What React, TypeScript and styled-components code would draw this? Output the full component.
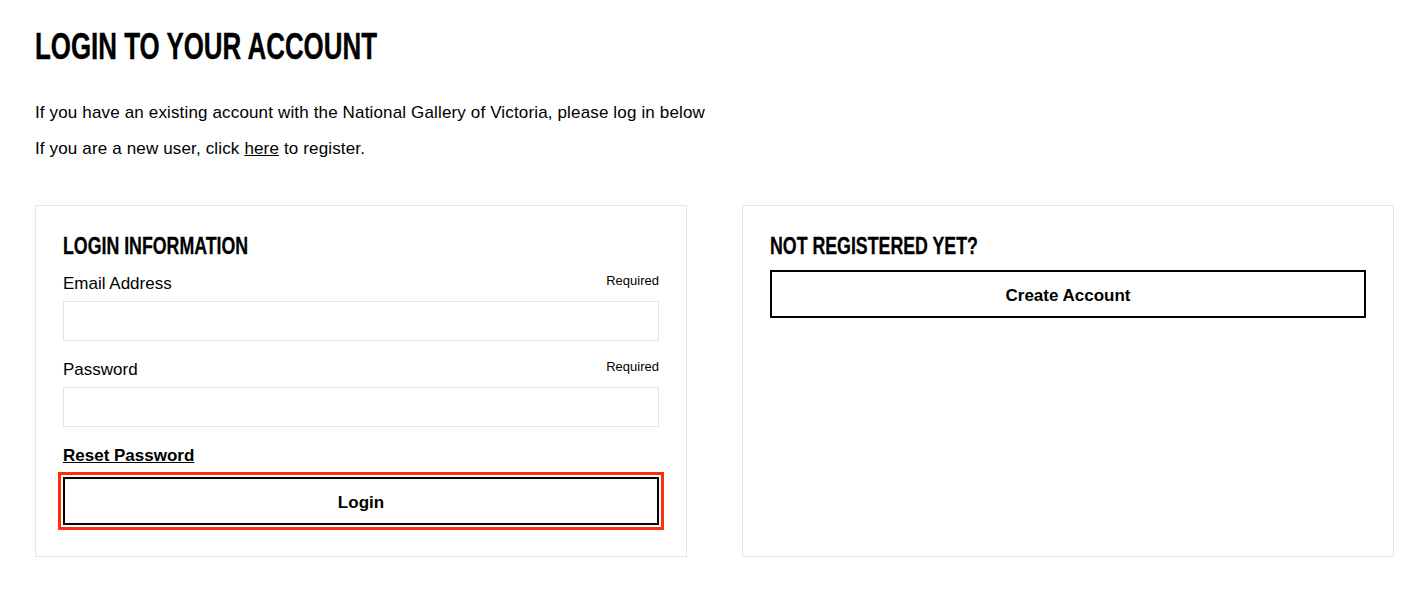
import React from "react";
import styled, { createGlobalStyle } from "styled-components";

const GlobalStyle = createGlobalStyle`
  html, body { margin: 0; padding: 0; background: #fff; }
  body { font-family: "Liberation Sans", Arial, sans-serif; color: #000; }
  * { box-sizing: border-box; }
`;

const Page = styled.main`
  padding: 29px 0 0 35px;
  width: 1394px;
`;

const Title = styled.h1`
  margin: 0;
  font-family: "Liberation Sans", Arial, sans-serif;
  font-weight: 700;
  font-size: 37px;
  line-height: 36px;
  transform: scaleX(0.7);
  transform-origin: left center;
  white-space: nowrap;
  -webkit-text-stroke: 0.4px #000;
`;

const Intro = styled.p`
  margin: 0;
  font-size: 17px;
  letter-spacing: 0.15px;
  line-height: 36px;
`;

const IntroBlock = styled.div`
  margin-top: 30px;
`;

const TextLink = styled.a`
  color: #000;
  text-decoration: underline;
`;

const Columns = styled.div`
  display: grid;
  grid-template-columns: 652px 652px;
  column-gap: 55px;
  margin-top: 38px;
`;

const Card = styled.section`
  border: 1px solid #e6e6e6;
  padding: 26px 27px 31px 27px;
  display: flex;
  flex-direction: column;
`;

const CardTitle = styled.h2`
  margin: 0;
  font-family: "Liberation Sans", Arial, sans-serif;
  font-weight: 700;
  font-size: 24px;
  line-height: 28px;
  transform: scaleX(0.74);
  transform-origin: left center;
  white-space: nowrap;
  -webkit-text-stroke: 0.3px #000;
`;

const Field = styled.div<{ $first?: boolean }>`
  display: flex;
  flex-direction: column;
  margin-top: ${(p) => (p.$first ? "9px" : "14px")};
`;

const LabelRow = styled.div`
  display: flex;
  justify-content: space-between;
  align-items: flex-start;
  height: 28px;
`;

const Label = styled.label`
  font-size: 17px;
  line-height: 24px;
  margin-top: 3px;
`;

const Required = styled.span`
  font-size: 13px;
  line-height: 24px;
`;

const Input = styled.input`
  display: block;
  width: 100%;
  height: 40px;
  margin-top: 4px;
  border: 1px solid #e6e6e6;
  padding: 0 10px;
  font-size: 16px;
  font-family: inherit;
  background: #fff;
  outline: none;
`;

const ResetLink = styled.a`
  margin-top: 18px;
  font-size: 17px;
  font-weight: 700;
  line-height: 22px;
  color: #000;
  text-decoration: underline;
  align-self: flex-start;
`;

const Button = styled.button<{ $focused?: boolean }>`
  display: block;
  width: 100%;
  height: 48px;
  padding: 3px 0 0;
  border: 2px solid #000;
  background: #fff;
  color: #000;
  font-family: "Liberation Sans", Arial, sans-serif;
  font-weight: 700;
  font-size: 17px;
  cursor: pointer;
  outline: ${(p) => (p.$focused ? "3px solid #ff2d0b" : "none")};
  outline-offset: 2px;
`;

const LoginButton = styled(Button)`
  margin-top: 10px;
`;

const CreateButton = styled(Button)`
  margin-top: 10px;
`;

export default function App() {
  return (
    <>
      <GlobalStyle />
      <Page>
        <Title>LOGIN TO YOUR ACCOUNT</Title>
        <IntroBlock>
          <Intro>
            If you have an existing account with the National Gallery of Victoria, please log in below
          </Intro>
          <Intro>
            If you are a new user, click <TextLink href="#">here</TextLink> to register.
          </Intro>
        </IntroBlock>
        <Columns>
          <Card>
            <CardTitle>LOGIN INFORMATION</CardTitle>
            <Field $first>
              <LabelRow>
                <Label>Email Address</Label>
                <Required>Required</Required>
              </LabelRow>
              <Input type="email" />
            </Field>
            <Field>
              <LabelRow>
                <Label>Password</Label>
                <Required>Required</Required>
              </LabelRow>
              <Input type="password" />
            </Field>
            <ResetLink href="#">Reset Password</ResetLink>
            <LoginButton $focused>Login</LoginButton>
          </Card>
          <Card>
            <CardTitle>NOT REGISTERED YET?</CardTitle>
            <CreateButton>Create Account</CreateButton>
          </Card>
        </Columns>
      </Page>
    </>
  );
}
